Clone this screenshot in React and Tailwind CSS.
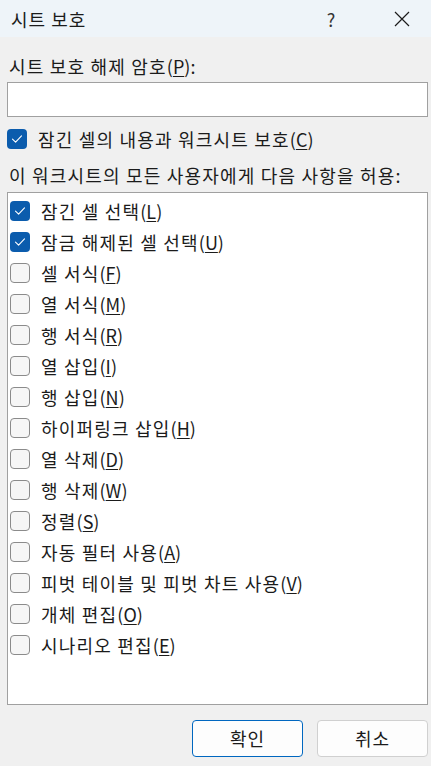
import { useState } from 'react';

const FONT = { fontFamily: '"Noto Sans CJK KR", "Noto Sans", sans-serif' };

const OPTIONS = [
  { label: '잠긴 셀 선택', key: 'L', checked: true },
  { label: '잠금 해제된 셀 선택', key: 'U', checked: true },
  { label: '셀 서식', key: 'F' },
  { label: '열 서식', key: 'M' },
  { label: '행 서식', key: 'R' },
  { label: '열 삽입', key: 'I' },
  { label: '행 삽입', key: 'N' },
  { label: '하이퍼링크 삽입', key: 'H' },
  { label: '열 삭제', key: 'D' },
  { label: '행 삭제', key: 'W' },
  { label: '정렬', key: 'S' },
  { label: '자동 필터 사용', key: 'A' },
  { label: '피벗 테이블 및 피벗 차트 사용', key: 'V' },
  { label: '개체 편집', key: 'O' },
  { label: '시나리오 편집', key: 'E' },
];

function Mnemonic({ k }) {
  return (
    <span className="tracking-normal">
      (<span className="underline underline-offset-2 decoration-1">{k}</span>)
    </span>
  );
}

function Check({ checked, onClick }) {
  return (
    <button
      onClick={onClick}
      className={`w-[20px] h-[20px] rounded-[4px] flex items-center justify-center flex-shrink-0 ${
        checked ? 'bg-[#0b5cad]' : 'bg-[#f6f6f6] border border-[#8b8b8b]'
      }`}
    >
      {checked && (
        <svg width="12" height="10" viewBox="0 0 12 10" fill="none">
          <path d="M1.5 5.2 L4.6 8.2 L10.5 1.8" stroke="white" strokeWidth="1.1" strokeLinecap="round" strokeLinejoin="round" />
        </svg>
      )}
    </button>
  );
}

export default function App() {
  const [protect, setProtect] = useState(true);
  const [opts, setOpts] = useState(OPTIONS.map(o => !!o.checked));

  const toggle = i => setOpts(prev => prev.map((v, j) => (j === i ? !v : v)));

  return (
    <div className="w-[431px] h-[766px] bg-[#f0f0f0] text-[#1b1b1b] flex flex-col overflow-hidden" style={FONT}>
      {/* Title bar */}
      <div className="h-[37px] bg-[#eef4f9] flex items-center flex-shrink-0">
        <div className="pl-[11px] text-[18px] tracking-[1px] leading-none flex-1">시트 보호</div>
        <div className="text-[18px] leading-none text-[#333] w-[16px] mr-[55px] text-center">?</div>
        <svg width="16" height="16" viewBox="0 0 16 16" className="mr-[21px]">
          <path d="M1 1 L15 15 M15 1 L1 15" stroke="#1b1b1b" strokeWidth="1.2" />
        </svg>
      </div>

      <div className="flex flex-col pl-[7px] pr-[3px] text-[18px] tracking-[1.2px]">
        <div className="mt-[17px] h-[24px] leading-[24px] pl-[2px]">
          시트 보호 해제 암호<Mnemonic k="P" />:
        </div>

        <input className="mt-[4px] h-[35px] bg-white border border-[#a0a0a0] outline-none px-2 text-[16px]" />

        <div className="mt-[10px] h-[24px] flex items-center gap-[11px]">
          <Check checked={protect} onClick={() => setProtect(!protect)} />
          <span className="leading-[24px]">
            잠긴 셀의 내용과 워크시트 보호<Mnemonic k="C" />
          </span>
        </div>

        <div className="mt-[12px] h-[24px] leading-[24px] pl-[2px]">
          이 워크시트의 모든 사용자에게 다음 사항을 허용:
        </div>

        {/* Permissions list */}
        <div className="mt-[5px] h-[513px] bg-white border border-[#a0a0a0] pt-[2px] pl-[2px]">
          {OPTIONS.map((o, i) => (
            <div key={o.key} className="h-[31px] flex items-center gap-[11px]">
              <Check checked={opts[i]} onClick={() => toggle(i)} />
              <span className="leading-[24px]">
                {o.label}
                <Mnemonic k={o.key} />
              </span>
            </div>
          ))}
        </div>

        {/* Buttons */}
        <div className="mt-[15px] flex justify-end gap-[14px]">
          <button className="w-[111px] h-[37px] rounded-[4px] bg-[#fdfdfd] border-[1.5px] border-[#0067c0] text-[18px] tracking-[1px]">
            확인
          </button>
          <button className="w-[111px] h-[37px] rounded-[4px] bg-[#fdfdfd] border border-[#d0d0d0] text-[18px] tracking-[1px]">
            취소
          </button>
        </div>
      </div>
    </div>
  );
}
